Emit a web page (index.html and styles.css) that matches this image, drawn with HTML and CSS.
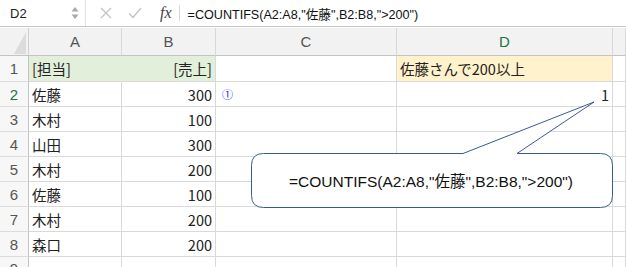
FILE: index.html
```html
<!DOCTYPE html>
<html lang="ja">

<head>
    <meta charset="UTF-8">
    <title>COUNTIFS</title>
    <link rel="stylesheet" href="styles.css">
</head>

<body>
    <!-- 数式バー -->
    <div class="formula-bar">
        <div class="name-box">
            <span>D2</span>
            <svg class="spin" width="8" height="14" viewBox="0 0 8 14">
                <path d="M4 1 L7.5 5.5 H0.5 Z" fill="#a8a8a8" />
                <path d="M4 13 L7.5 8.5 H0.5 Z" fill="#a8a8a8" />
            </svg>
        </div>
        <div class="bar-icons">
            <svg width="12" height="12" viewBox="0 0 12 12">
                <path d="M1 1 L11 11 M11 1 L1 11" stroke="#c4c4c4" stroke-width="1.3" />
            </svg>
            <svg width="14" height="12" viewBox="0 0 14 12">
                <path d="M1 6.5 L5 10.5 L13 1" stroke="#c4c4c4" stroke-width="1.3" fill="none" />
            </svg>
            <span class="fx">fx</span>
        </div>
        <div class="formula">=COUNTIFS(A2:A8,"佐藤",B2:B8,"&gt;200")</div>
    </div>

    <div class="sheet">
        <div class="corner">
            <svg width="29" height="28" viewBox="0 0 29 28">
                <path d="M26 4 V26 H14 Z" fill="#dcdcdc" />
            </svg>
        </div>
        <div class="col-head">A</div>
        <div class="col-head">B</div>
        <div class="col-head">C</div>
        <div class="col-head selected">D</div>
        <div class="col-head"></div>

        <div class="row-head">1</div>
        <div class="cell green">[担当]</div>
        <div class="cell green num">[売上]</div>
        <div class="cell"></div>
        <div class="cell yellow">佐藤さんで200以上</div>
        <div class="cell"></div>

        <div class="row-head selected">2</div>
        <div class="cell">佐藤</div>
        <div class="cell num">300</div>
        <div class="cell"><span class="mark">①</span></div>
        <div class="cell num">1</div>
        <div class="cell"></div>

        <div class="row-head">3</div>
        <div class="cell">木村</div>
        <div class="cell num">100</div>
        <div class="cell"></div>
        <div class="cell"></div>
        <div class="cell"></div>

        <div class="row-head">4</div>
        <div class="cell">山田</div>
        <div class="cell num">300</div>
        <div class="cell"></div>
        <div class="cell"></div>
        <div class="cell"></div>

        <div class="row-head">5</div>
        <div class="cell">木村</div>
        <div class="cell num">200</div>
        <div class="cell"></div>
        <div class="cell"></div>
        <div class="cell"></div>

        <div class="row-head">6</div>
        <div class="cell">佐藤</div>
        <div class="cell num">100</div>
        <div class="cell"></div>
        <div class="cell"></div>
        <div class="cell"></div>

        <div class="row-head">7</div>
        <div class="cell">木村</div>
        <div class="cell num">200</div>
        <div class="cell"></div>
        <div class="cell"></div>
        <div class="cell"></div>

        <div class="row-head">8</div>
        <div class="cell">森口</div>
        <div class="cell num">200</div>
        <div class="cell"></div>
        <div class="cell"></div>
        <div class="cell"></div>

        <div class="row-head last">9</div>
        <div class="cell"></div>
        <div class="cell"></div>
        <div class="cell"></div>
        <div class="cell"></div>
        <div class="cell"></div>

        <!-- 吹き出し -->
        <div class="callout">
            <svg width="626" height="267" viewBox="0 0 626 267">
                <path d="M263.5 153.5 H463 L594 102 L517 153.5 H600.5 Q612.5 153.5 612.5 165.5 V195.5 Q612.5 207.5 600.5 207.5 H263.5 Q251.5 207.5 251.5 195.5 V165.5 Q251.5 153.5 263.5 153.5 Z" fill="#fff" stroke="#3a5a93" stroke-width="1" />
            </svg>
            <div class="callout-text">=COUNTIFS(A2:A8,"佐藤",B2:B8,"&gt;200")</div>
        </div>
    </div>
</body>

</html>
```

FILE: styles.css
```css
body {
    margin: 0;
    width: 626px;
    height: 267px;
    overflow: hidden;
    background: #fff;
    font-family: "Liberation Sans", "Noto Sans CJK JP", sans-serif;
    color: #222;
}

.formula-bar {
    display: flex;
    align-items: center;
    height: 27px;
    box-sizing: border-box;
    border-bottom: 1px solid #c9c9c9;
    margin-bottom: 1px;
}

.name-box {
    display: flex;
    align-items: center;
    justify-content: space-between;
    width: 86px;
    height: 100%;
    box-sizing: border-box;
    padding: 0 6px 0 10px;
    border-right: 1px solid #e2e2e2;
    font-size: 13px;
}

.bar-icons {
    display: flex;
    align-items: center;
    gap: 16px;
    padding-left: 14px;
    height: 16px;
    padding-right: 7px;
    border-right: 1px solid #d6d6d6;
}

.bar-icons .fx {
    font-family: "Liberation Serif", "DejaVu Serif", serif;
    font-style: italic;
    font-size: 16px;
    color: #444;
    margin-left: 2px;
}

.formula {
    padding-left: 8px;
    font-size: 12.6px;
    color: #111;
}

/* シート */
.sheet {
    position: relative;
    display: grid;
    grid-template-columns: 29px 93px 94px 181px 216px 1fr;
    grid-template-rows: 28px 26px repeat(7, 25px) 1fr;
    height: 239px;
}

.corner,
.col-head,
.row-head {
    background: #f2f2f2;
    color: #555;
    box-sizing: border-box;
}

.corner {
    border-right: 1px solid #d0d0d0;
    border-bottom: 1px solid #c4c4c4;
}

.corner svg {
    display: block;
}

.col-head {
    display: flex;
    align-items: center;
    justify-content: center;
    font-size: 15px;
    border-right: 1px solid #d8d8d8;
    border-bottom: 1px solid #c4c4c4;
}

.row-head {
    display: flex;
    align-items: center;
    justify-content: center;
    font-size: 15px;
    border-right: 1px solid #c4c4c4;
    border-bottom: 1px solid #dcdcdc;
    background: #f7f7f7;
}

.row-head.last {
    align-items: flex-start;
    padding-top: 3px;
}

.col-head.selected,
.row-head.selected {
    color: #217346;
}

.cell {
    display: flex;
    align-items: center;
    padding: 0 3px;
    box-sizing: border-box;
    border-right: 1px solid #d9d9d9;
    border-bottom: 1px solid #d9d9d9;
    font-family: "Noto Sans CJK JP", sans-serif;
    font-size: 14.5px;
    white-space: nowrap;
}

.cell.num {
    justify-content: flex-end;
}

.cell.green {
    background: #e2efda;
    border-right-color: #e2efda;
}

.cell.green.num {
    border-right-color: #d9d9d9;
}

.cell.yellow {
    background: #fff2cc;
}

.mark {
    color: #1a1aff;
    font-size: 11px;
    padding-left: 3px;
}

.callout {
    position: absolute;
    left: 0;
    top: -28px;
    width: 626px;
    height: 267px;
    pointer-events: none;
}

.callout svg {
    position: absolute;
    left: 0;
    top: 0;
}

.callout-text {
    position: absolute;
    left: 252px;
    top: 153px;
    width: 358px;
    height: 53px;
    display: flex;
    align-items: center;
    justify-content: center;
    font-size: 15.5px;
    color: #111;
}
```
